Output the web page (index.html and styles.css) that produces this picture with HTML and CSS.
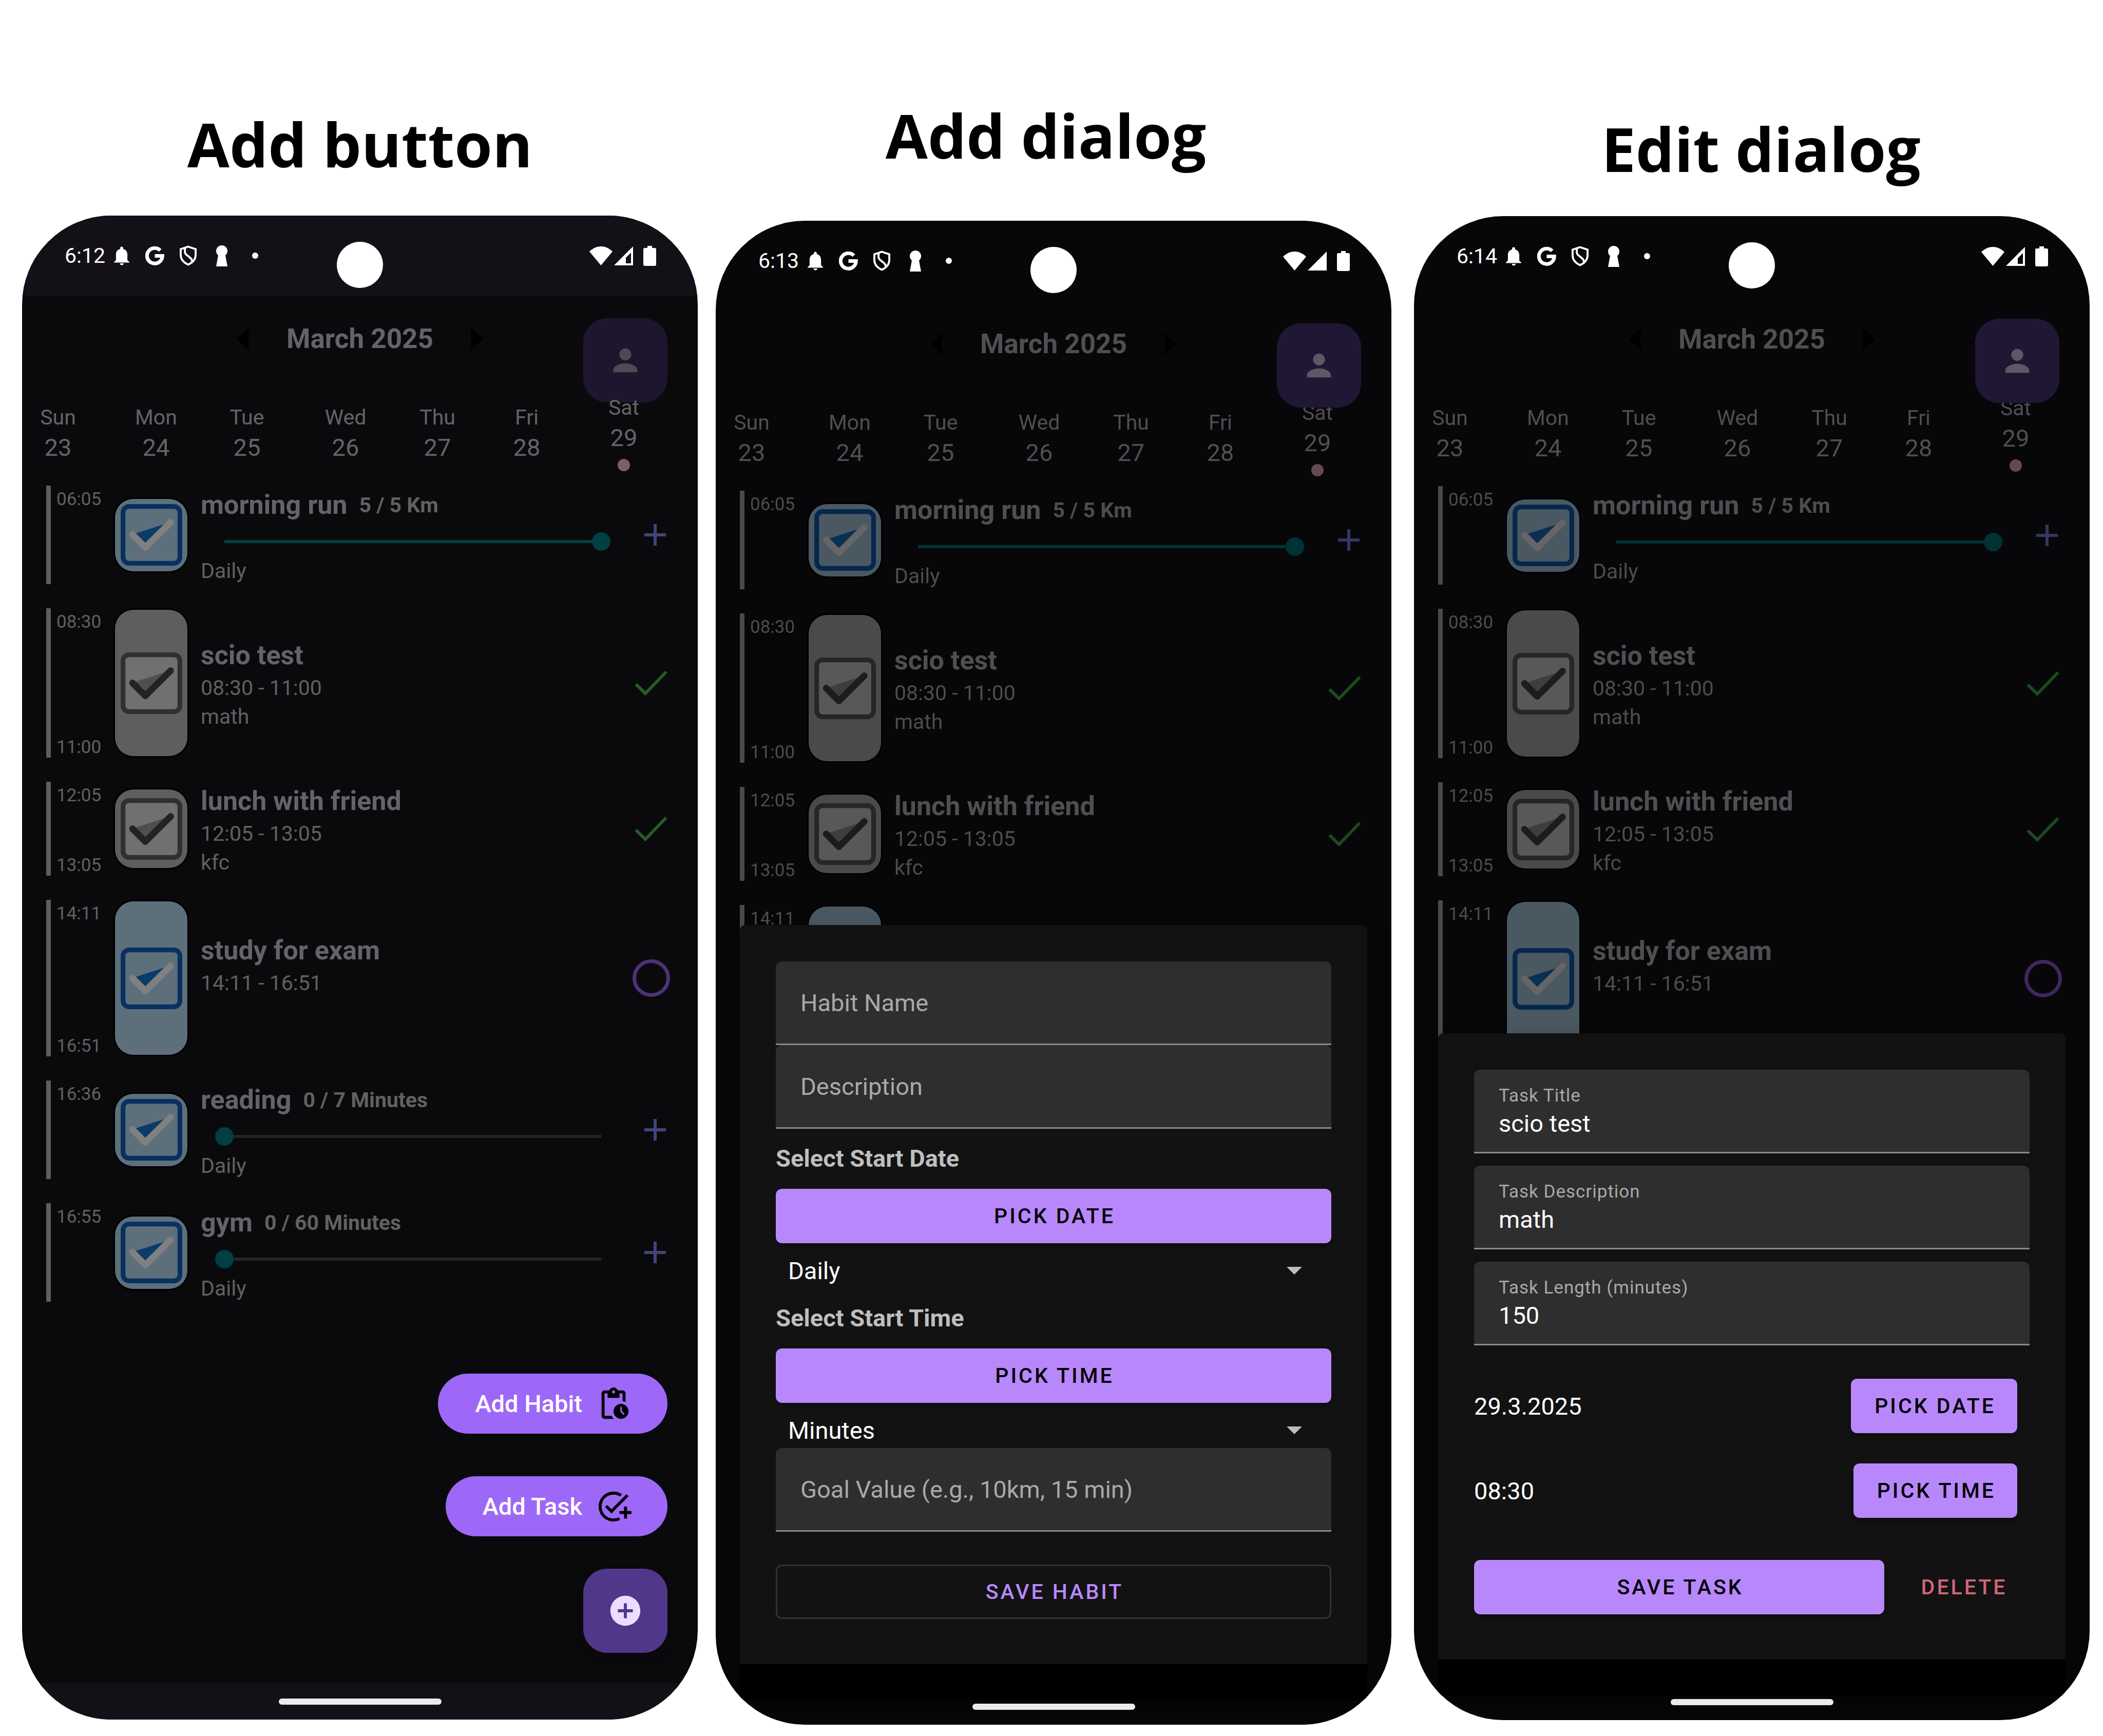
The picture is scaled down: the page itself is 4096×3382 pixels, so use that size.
FILE: index.html
```html
<!DOCTYPE html>
<html lang="en">
<head>
<meta charset="utf-8">
<meta name="viewport" content="width=device-width, initial-scale=1">
<title>Habit planner screens</title>
<link rel="stylesheet" href="styles.css">
</head>
<body>
<svg class="sprite" aria-hidden="true">
  <symbol id="bell" viewBox="0 0 31 37"><path d="M15.500 0a3 3 0 0 1 3 3v1.500C24.500 6 27 10.500 27 16v11l4 4v1H0v-1l4-4V16C4 10.500 6.500 6 12.500 4.500V3a3 3 0 0 1 3-3zM12 33.500h7.500a3.700 3.500 0 0 1-7.500 0z"/></symbol>
  <symbol id="google" viewBox="0 0 37 37"><path d="M29.100 7.900A15 15 0 1 0 33.300 18.500H18.500" fill="none" stroke="#fff" stroke-width="7"/></symbol>
  <symbol id="shield" viewBox="0 0 34 40"><path d="M17 2 32 7V18C32 27 26 34 17 38 8 34 2 27 2 18V7ZM11 5C9 16 12 17 17 21S26 28 24 32" fill="none" stroke="#fff" stroke-width="4"/></symbol>
  <symbol id="keyhole" viewBox="0 0 22 41"><circle cx="11" cy="11" r="11"/><path d="M5 14h12l5 27H0z"/></symbol>
  <symbol id="wifi" viewBox="0 0 45 37"><path d="M22.500 37 0 10C6 4 14 0 22.500 0S39 4 45 10Z"/></symbol>
  <symbol id="signal" viewBox="0 0 37 37"><path d="M37 0v37H0z"/></symbol>
  <symbol id="signal-low" viewBox="0 0 37 37"><path fill-rule="evenodd" d="M37 0v37H0zM33 12 23 22v11h10z"/></symbol>
  <symbol id="battery" viewBox="0 0 25 39"><path d="M8 0h9v4h5a3 3 0 0 1 3 3v29a3 3 0 0 1-3 3H3a3 3 0 0 1-3-3V7a3 3 0 0 1 3-3h5z"/></symbol>
  <symbol id="prev" viewBox="0 0 26 44"><path d="M26 2Q23 5 23 9V35Q23 39 26 42L24 44 0 22 24 0Z"/></symbol>
  <symbol id="next" viewBox="0 0 26 44"><path d="M0 2Q3 5 3 9V35Q3 39 0 42L2 44 26 22 2 0Z"/></symbol>
  <symbol id="person" viewBox="0 0 24 24"><path d="M12 12c2.210 0 4-1.790 4-4s-1.790-4-4-4-4 1.790-4 4 1.790 4 4 4zm0 2c-4 0-8 2-8 4.500V20h16v-1.500C20 16 16 14 12 14z"/></symbol>
  <symbol id="tick" viewBox="0 0 122 122">
    <rect class="tick-box" x="4.700" y="4.700" width="112.600" height="112.600" rx="12"/>
    <path class="tick-fill" d="M30 58 86 40 49 78Z"/>
    <path class="tick-mark" d="M23.500 60.500 48.700 86 99 36"/>
  </symbol>
  <symbol id="plus" viewBox="0 0 42 42"><path d="M21 0v42M0 21h42" fill="none" stroke="#43447b" stroke-width="6"/></symbol>
  <symbol id="check" viewBox="0 0 64 49"><path d="M2.500 27 21 45 61.500 3" fill="none" stroke="#265c28" stroke-width="6"/></symbol>
  <symbol id="ring" viewBox="0 0 73 73"><circle cx="36.500" cy="36.500" r="33" fill="none" stroke="#4f3178" stroke-width="7"/></symbol>
  <symbol id="pending" viewBox="0 0 24 24"><path d="M17,12c-2.760,0-5,2.240-5,5s2.240,5,5,5c2.760,0,5-2.240,5-5S19.760,12,17,12z M18.650,19.350l-2.150-2.150V14h1v2.790l1.850,1.850L18.650,19.350z M18,3h-3.180C14.400,1.840,13.300,1,12,1S9.600,1.840,9.180,3H6C4.900,3,4,3.900,4,5v15c0,1.100,0.900,2,2,2h6.110c-0.590-0.570-1.070-1.250-1.420-2H6V5h2v3h8V5h2v5.080c0.710,0.100,1.380,0.310,2,0.600V5C20,3.900,19.100,3,18,3z M12,5c-0.550,0-1-0.450-1-1c0-0.550,0.450-1,1-1c0.550,0,1,0.450,1,1C13,4.550,12.550,5,12,5z"/></symbol>
  <symbol id="add-task" viewBox="0 0 24 24"><path d="M22 5.180 10.590 16.600l-4.240-4.240 1.410-1.410 2.830 2.830 10-10z"/><path d="M17 4.500A9 9 0 1 0 16 20.060M20 12v8M16 16h8" fill="none" stroke="#000" stroke-width="2"/></symbol>
  <symbol id="add-circle" viewBox="0 0 24 24"><path d="M12 2C6.480 2 2 6.480 2 12s4.480 10 10 10 10-4.480 10-10S17.520 2 12 2zm5 11h-4v4h-2v-4H7v-2h4V7h2v4h4v2z"/></symbol>
</svg>

<main class="board">
  <section class="column column-button">
    <h1 class="heading">Add button</h1>
    <div class="phone phone-lit">
      <div class="status">
        <span class="clock">6:12</span>
        <span class="cell"><svg class="i-bell"><use href="#bell"/></svg></span>
        <span class="cell"><svg class="i-google"><use href="#google"/></svg></span>
        <span class="cell"><svg class="i-shield"><use href="#shield"/></svg></span>
        <span class="cell"><svg class="i-keyhole"><use href="#keyhole"/></svg></span>
        <span class="cell"><span class="more"></span></span>
        <span class="system"><svg class="i-wifi"><use href="#wifi"/></svg><svg class="i-signal"><use href="#signal-low"/></svg><svg class="i-battery"><use href="#battery"/></svg></span>
      </div>
      <div class="camera"></div>
      <button class="profile" aria-label="Profile"><svg class="i-24"><use href="#person"/></svg></button>
      <div class="screen">
        <div class="month">
          <button class="arrow" aria-label="Previous month"><svg class="i-arrow"><use href="#prev"/></svg></button>
          <h2 class="month-name">March 2025</h2>
          <button class="arrow" aria-label="Next month"><svg class="i-arrow"><use href="#next"/></svg></button>
        </div>
        <div class="week">
          <div class="day"><span>Sun</span><span class="date">23</span></div>
          <div class="day"><span>Mon</span><span class="date">24</span></div>
          <div class="day"><span>Tue</span><span class="date">25</span></div>
          <div class="day"><span>Wed</span><span class="date">26</span></div>
          <div class="day"><span>Thu</span><span class="date">27</span></div>
          <div class="day"><span>Fri</span><span class="date">28</span></div>
          <div class="day"><span>Sat</span><span class="date">29</span><span class="today"></span></div>
        </div>
        <ul class="agenda">
          <li class="row habit">
            <div class="times"><span>06:05</span></div>
            <div class="tile blue"><svg class="i-tick"><use href="#tick"/></svg></div>
            <div class="info"><div class="title-line"><h3 class="title">morning run</h3><span class="progress">5 / 5 Km</span></div><input class="slider full" type="range" min="0" max="5" value="5" aria-label="morning run progress"><p class="note">Daily</p></div>
            <button class="action" aria-label="Add progress"><svg class="i-plus"><use href="#plus"/></svg></button>
          </li>
          <li class="row task long">
            <div class="times"><span>08:30</span><span>11:00</span></div>
            <div class="tile tall gray"><svg class="i-tick"><use href="#tick"/></svg></div>
            <div class="info"><h3 class="title">scio test</h3><p class="note">08:30 - 11:00</p><p class="note">math</p></div>
            <button class="action" aria-label="Done"><svg class="i-check"><use href="#check"/></svg></button>
          </li>
          <li class="row task short">
            <div class="times"><span>12:05</span><span>13:05</span></div>
            <div class="tile mid gray"><svg class="i-tick"><use href="#tick"/></svg></div>
            <div class="info"><h3 class="title">lunch with friend</h3><p class="note">12:05 - 13:05</p><p class="note">kfc</p></div>
            <button class="action" aria-label="Done"><svg class="i-check"><use href="#check"/></svg></button>
          </li>
          <li class="row task longer">
            <div class="times"><span>14:11</span><span>16:51</span></div>
            <div class="tile tall blue"><svg class="i-tick"><use href="#tick"/></svg></div>
            <div class="info"><h3 class="title">study for exam</h3><p class="note">14:11 - 16:51</p><p class="note"></p></div>
            <button class="action" aria-label="Mark as done"><svg class="i-ring"><use href="#ring"/></svg></button>
          </li>
          <li class="row habit">
            <div class="times"><span>16:36</span></div>
            <div class="tile blue"><svg class="i-tick"><use href="#tick"/></svg></div>
            <div class="info"><div class="title-line"><h3 class="title">reading</h3><span class="progress">0 / 7 Minutes</span></div><input class="slider" type="range" min="0" max="7" value="0" aria-label="reading progress"><p class="note">Daily</p></div>
            <button class="action" aria-label="Add progress"><svg class="i-plus"><use href="#plus"/></svg></button>
          </li>
          <li class="row habit">
            <div class="times"><span>16:55</span></div>
            <div class="tile blue"><svg class="i-tick"><use href="#tick"/></svg></div>
            <div class="info"><div class="title-line"><h3 class="title">gym</h3><span class="progress">0 / 60 Minutes</span></div><input class="slider" type="range" min="0" max="60" value="0" aria-label="gym progress"><p class="note">Daily</p></div>
            <button class="action" aria-label="Add progress"><svg class="i-plus"><use href="#plus"/></svg></button>
          </li>
        </ul>
      </div>
      <div class="speed-dial">
        <button class="pill">Add Habit<svg class="i-24"><use href="#pending"/></svg></button>
        <button class="pill">Add Task<svg class="i-24"><use href="#add-task"/></svg></button>
        <button class="fab" aria-label="Add"><svg class="i-24"><use href="#add-circle"/></svg></button>
      </div>
      <div class="nav"><span class="home"></span></div>
    </div>
  </section>

  <section class="column column-add">
    <h1 class="heading">Add dialog</h1>
    <div class="phone">
      <div class="status">
        <span class="clock">6:13</span>
        <span class="cell"><svg class="i-bell"><use href="#bell"/></svg></span>
        <span class="cell"><svg class="i-google"><use href="#google"/></svg></span>
        <span class="cell"><svg class="i-shield"><use href="#shield"/></svg></span>
        <span class="cell"><svg class="i-keyhole"><use href="#keyhole"/></svg></span>
        <span class="cell"><span class="more"></span></span>
        <span class="system"><svg class="i-wifi"><use href="#wifi"/></svg><svg class="i-signal"><use href="#signal"/></svg><svg class="i-battery"><use href="#battery"/></svg></span>
      </div>
      <div class="camera"></div>
      <div class="screen dimmed">
        <div class="month">
          <button class="arrow" aria-label="Previous month"><svg class="i-arrow"><use href="#prev"/></svg></button>
          <h2 class="month-name">March 2025</h2>
          <button class="arrow" aria-label="Next month"><svg class="i-arrow"><use href="#next"/></svg></button>
        </div>
        <div class="week">
          <div class="day"><span>Sun</span><span class="date">23</span></div>
          <div class="day"><span>Mon</span><span class="date">24</span></div>
          <div class="day"><span>Tue</span><span class="date">25</span></div>
          <div class="day"><span>Wed</span><span class="date">26</span></div>
          <div class="day"><span>Thu</span><span class="date">27</span></div>
          <div class="day"><span>Fri</span><span class="date">28</span></div>
          <div class="day"><span>Sat</span><span class="date">29</span><span class="today"></span></div>
        </div>
        <ul class="agenda">
          <li class="row habit">
            <div class="times"><span>06:05</span></div>
            <div class="tile blue"><svg class="i-tick"><use href="#tick"/></svg></div>
            <div class="info"><div class="title-line"><h3 class="title">morning run</h3><span class="progress">5 / 5 Km</span></div><input class="slider full" type="range" min="0" max="5" value="5" aria-label="morning run progress"><p class="note">Daily</p></div>
            <button class="action" aria-label="Add progress"><svg class="i-plus"><use href="#plus"/></svg></button>
          </li>
          <li class="row task long">
            <div class="times"><span>08:30</span><span>11:00</span></div>
            <div class="tile tall gray"><svg class="i-tick"><use href="#tick"/></svg></div>
            <div class="info"><h3 class="title">scio test</h3><p class="note">08:30 - 11:00</p><p class="note">math</p></div>
            <button class="action" aria-label="Done"><svg class="i-check"><use href="#check"/></svg></button>
          </li>
          <li class="row task short">
            <div class="times"><span>12:05</span><span>13:05</span></div>
            <div class="tile mid gray"><svg class="i-tick"><use href="#tick"/></svg></div>
            <div class="info"><h3 class="title">lunch with friend</h3><p class="note">12:05 - 13:05</p><p class="note">kfc</p></div>
            <button class="action" aria-label="Done"><svg class="i-check"><use href="#check"/></svg></button>
          </li>
          <li class="row task longer">
            <div class="times"><span>14:11</span></div>
            <div class="tile tall blue"></div>
          </li>
        </ul>
      </div>
      <button class="profile" aria-label="Profile"><svg class="i-24"><use href="#person"/></svg></button>
      <form class="sheet">
        <input class="field" type="text" placeholder="Habit Name" aria-label="Habit Name">
        <input class="field" type="text" placeholder="Description" aria-label="Description">
        <p class="group-label">Select Start Date</p>
        <button class="btn" type="button">PICK DATE</button>
        <div class="picker"><select aria-label="Repeat"><option>Daily</option></select></div>
        <p class="group-label">Select Start Time</p>
        <button class="btn" type="button">PICK TIME</button>
        <div class="picker"><select aria-label="Unit"><option>Minutes</option></select></div>
        <input class="field" type="text" placeholder="Goal Value (e.g., 10km, 15 min)" aria-label="Goal Value">
        <button class="btn outline" type="button">SAVE HABIT</button>
      </form>
      <div class="nav"><span class="home"></span></div>
    </div>
  </section>

  <section class="column column-edit">
    <h1 class="heading">Edit dialog</h1>
    <div class="phone">
      <div class="status">
        <span class="clock">6:14</span>
        <span class="cell"><svg class="i-bell"><use href="#bell"/></svg></span>
        <span class="cell"><svg class="i-google"><use href="#google"/></svg></span>
        <span class="cell"><svg class="i-shield"><use href="#shield"/></svg></span>
        <span class="cell"><svg class="i-keyhole"><use href="#keyhole"/></svg></span>
        <span class="cell"><span class="more"></span></span>
        <span class="system"><svg class="i-wifi"><use href="#wifi"/></svg><svg class="i-signal"><use href="#signal-low"/></svg><svg class="i-battery"><use href="#battery"/></svg></span>
      </div>
      <div class="camera"></div>
      <div class="screen dimmed">
        <div class="month">
          <button class="arrow" aria-label="Previous month"><svg class="i-arrow"><use href="#prev"/></svg></button>
          <h2 class="month-name">March 2025</h2>
          <button class="arrow" aria-label="Next month"><svg class="i-arrow"><use href="#next"/></svg></button>
        </div>
        <div class="week">
          <div class="day"><span>Sun</span><span class="date">23</span></div>
          <div class="day"><span>Mon</span><span class="date">24</span></div>
          <div class="day"><span>Tue</span><span class="date">25</span></div>
          <div class="day"><span>Wed</span><span class="date">26</span></div>
          <div class="day"><span>Thu</span><span class="date">27</span></div>
          <div class="day"><span>Fri</span><span class="date">28</span></div>
          <div class="day"><span>Sat</span><span class="date">29</span><span class="today"></span></div>
        </div>
        <ul class="agenda">
          <li class="row habit">
            <div class="times"><span>06:05</span></div>
            <div class="tile blue"><svg class="i-tick"><use href="#tick"/></svg></div>
            <div class="info"><div class="title-line"><h3 class="title">morning run</h3><span class="progress">5 / 5 Km</span></div><input class="slider full" type="range" min="0" max="5" value="5" aria-label="morning run progress"><p class="note">Daily</p></div>
            <button class="action" aria-label="Add progress"><svg class="i-plus"><use href="#plus"/></svg></button>
          </li>
          <li class="row task long">
            <div class="times"><span>08:30</span><span>11:00</span></div>
            <div class="tile tall gray"><svg class="i-tick"><use href="#tick"/></svg></div>
            <div class="info"><h3 class="title">scio test</h3><p class="note">08:30 - 11:00</p><p class="note">math</p></div>
            <button class="action" aria-label="Done"><svg class="i-check"><use href="#check"/></svg></button>
          </li>
          <li class="row task short">
            <div class="times"><span>12:05</span><span>13:05</span></div>
            <div class="tile mid gray"><svg class="i-tick"><use href="#tick"/></svg></div>
            <div class="info"><h3 class="title">lunch with friend</h3><p class="note">12:05 - 13:05</p><p class="note">kfc</p></div>
            <button class="action" aria-label="Done"><svg class="i-check"><use href="#check"/></svg></button>
          </li>
          <li class="row task longer">
            <div class="times"><span>14:11</span></div>
            <div class="tile tall blue"><svg class="i-tick"><use href="#tick"/></svg></div>
            <div class="info"><h3 class="title">study for exam</h3><p class="note">14:11 - 16:51</p><p class="note"></p></div>
            <button class="action" aria-label="Mark as done"><svg class="i-ring"><use href="#ring"/></svg></button>
          </li>
        </ul>
      </div>
      <button class="profile" aria-label="Profile"><svg class="i-24"><use href="#person"/></svg></button>
      <form class="sheet">
        <div class="fields">
          <div class="labelled"><label for="task-title">Task Title</label><input id="task-title" type="text" value="scio test"></div>
          <div class="labelled"><label for="task-text">Task Description</label><input id="task-text" type="text" value="math"></div>
          <div class="labelled"><label for="task-length">Task Length (minutes)</label><input id="task-length" type="text" value="150"></div>
        </div>
        <div class="pick-row"><span>29.3.2025</span><button class="btn" type="button">PICK DATE</button></div>
        <div class="pick-row"><span>08:30</span><button class="btn" type="button">PICK TIME</button></div>
        <div class="form-actions"><button class="btn save" type="button">SAVE TASK</button><button class="btn delete" type="button">DELETE</button></div>
      </form>
      <div class="nav"><span class="home"></span></div>
    </div>
  </section>
</main>
</body>
</html>
```

FILE: styles.css
```css
* { box-sizing: border-box; }

body {
  margin: 0;
  min-height: 100vh;
  background: #fff;
  font-family: Roboto, "Liberation Sans", sans-serif;
  font-size: 41px;
  line-height: 48px;
}

h1, h2, h3, p, ul { margin: 0; padding: 0; }
ul { list-style: none; }
svg { display: block; flex: none; fill: currentColor; }
.sprite { position: absolute; width: 0; height: 0; }

button {
  display: flex;
  align-items: center;
  justify-content: center;
  margin: 0;
  padding: 0;
  border: 0;
  background: none;
  color: inherit;
  font: inherit;
}

input, select { font: inherit; color: inherit; border: 0; outline: 0; }

/* Board */
.board { display: flex; align-items: flex-start; padding: 0 26px 0 43px; }
.column { flex: 1; min-width: 0; }
.column-button { padding-top: 200px; }
.column-add { padding-top: 183px; margin-left: 35px; }
.column-edit { padding-top: 209px; margin-left: 44px; }

.heading {
  font: bold 119px/160px "Open Sans", "Noto Sans", sans-serif;
  text-align: center;
  color: #000;
}
.column-button .heading { margin-bottom: 60px; }
.column-add .heading { margin-bottom: 87px; padding-right: 30px; }
.column-edit .heading { margin-bottom: 52px; padding-left: 36px; }

/* Phone */
.phone {
  position: relative;
  display: flex;
  flex-direction: column;
  aspect-ratio: 1316 / 2930;
  border-radius: 174px;
  overflow: hidden;
  background: #070709;
  color: #666368;
}
.phone-lit { background: #0a0a0c; }
.phone-lit .status, .phone-lit .nav { background: #131117; }

.status {
  display: flex;
  align-items: center;
  height: 156px;
  padding: 0 81px 0 83px;
  color: #fff;
}
.clock { width: 78px; white-space: nowrap; }
.cell { display: flex; justify-content: center; width: 65px; }
.more { width: 12px; height: 12px; border-radius: 50%; background: #fff; }
.system { display: flex; align-items: center; margin-left: auto; }
.i-bell { width: 30px; height: 37px; }
.i-google { width: 37px; height: 37px; }
.i-shield { width: 33px; height: 40px; }
.i-keyhole { width: 22px; height: 41px; }
.i-wifi { width: 45px; height: 37px; margin-right: 3px; }
.i-signal { width: 37px; height: 37px; margin-right: 20px; }
.i-battery { width: 25px; height: 39px; }

.camera {
  position: absolute;
  top: 51px;
  left: 50%;
  width: 90px;
  height: 90px;
  margin-left: -45px;
  border-radius: 50%;
  background: #fff;
}

.screen { flex: 1; min-height: 0; position: relative; padding-top: 53px; }
.dimmed { filter: brightness(.79); }

.month { display: flex; align-items: center; justify-content: center; gap: 71px; height: 62px; }
.month-name { font-size: 53px; line-height: 62px; font-weight: bold; }
.arrow { color: #000; }
.i-arrow { width: 26px; height: 44px; }

.profile {
  position: absolute;
  top: 200px;
  right: 59px;
  width: 164px;
  height: 164px;
  border-radius: 47px;
  background: #201735;
  color: #5e5765;
}
.phone-lit .profile { background: #1e162e; color: #4e4a53; }
.i-24 { width: 70px; height: 70px; }

.week {
  display: grid;
  grid-template-columns: 191fr 177fr 192fr 179fr 174fr 189fr 90fr;
  align-items: center;
  margin-top: 79px;
  padding: 0 99px 0 25px;
}
.day { display: flex; flex-direction: column; align-items: center; width: 90px; gap: 7px; }
.date { font-size: 47px; line-height: 55px; }
.today { width: 24px; height: 24px; margin-top: 7px; border-radius: 50%; background: #7f5e64; }

/* Agenda */
.agenda { display: flex; flex-direction: column; gap: 47px; padding: 28px 47px 0; color: #616161; }
.row { display: flex; align-items: center; height: 192px; border-left: 9px solid #5e5e5e; }
.long { height: 291px; }
.short { height: 183px; }
.longer { height: 305px; }

.times {
  display: flex;
  flex-direction: column;
  justify-content: space-between;
  align-self: stretch;
  width: 125px;
  padding: 6px 0 0 11px;
  font-size: 35px;
  line-height: 41px;
}

.tile {
  display: flex;
  align-items: center;
  justify-content: center;
  flex: none;
  width: 141px;
  height: 141px;
  border-radius: 36px;
  box-shadow: 0 0 0 3px #000;
}
.mid { height: 153px; }
.tall { height: auto; align-self: stretch; margin: 3px 0; }
.i-tick { width: 120px; height: 120px; }
.blue { background: #5e6f7c; --box: #083160; --inner: #5e6f7c; --fill: #0b3b69; --mark: #808080; }
.gray { background: #5e5e5e; --box: #303030; --inner: #707070; --fill: #4f4f4f; --mark: #232323; }
.tick-box { fill: var(--inner); stroke: var(--box); stroke-width: 9.3px; }
.tick-fill { fill: var(--fill); }
.tick-mark { fill: none; stroke: var(--mark); stroke-width: 13px; stroke-linecap: round; stroke-linejoin: round; }

.info { display: flex; flex-direction: column; flex: 1; min-width: 0; padding: 4px 0 0 26px; }
.title-line { display: flex; align-items: center; gap: 23px; }
.title { font-size: 52px; line-height: 62px; font-weight: bold; color: #666368; }
.progress { font-weight: bold; }
.note { min-height: 48px; }
.task .note { margin-top: 8px; }
.habit .info { margin-right: 23px; }

.slider {
  appearance: none;
  -webkit-appearance: none;
  height: 66px;
  margin: 7px 28px 0;
  background: linear-gradient(#242426, #242426) center / calc(100% - 36px) 6px no-repeat;
}
.slider.full { background-image: linear-gradient(#003f42, #003f42); }
.slider::-webkit-slider-thumb {
  -webkit-appearance: none;
  width: 36px;
  height: 36px;
  border-radius: 50%;
  background: #003f42;
}

.action { flex: none; width: 88px; height: 88px; }
.habit .action { width: 72px; }
.i-plus { width: 42px; height: 42px; }
.i-check { width: 64px; height: 49px; }
.i-ring { width: 73px; height: 73px; }

/* Add menu */
.speed-dial {
  position: absolute;
  right: 59px;
  bottom: 130px;
  display: flex;
  flex-direction: column;
  align-items: flex-end;
}
.pill {
  gap: 26px;
  height: 117px;
  margin-bottom: 83px;
  padding: 0 70px 0 72px;
  border-radius: 59px;
  background: #9d68f7;
  color: #fff;
  font-size: 47px;
  font-weight: 500;
  line-height: 55px;
}
.pill + .pill { margin-bottom: 63px; }
.pill svg { color: #000; }
.fab {
  width: 164px;
  height: 164px;
  border-radius: 47px;
  background: #50378a;
  color: #ecdcff;
  box-shadow: 0 12px 24px rgba(0, 0, 0, .15);
}

.nav { display: flex; justify-content: center; height: 71px; padding-top: 30px; position: relative; }
.home { width: 317px; height: 12px; border-radius: 6px; background: #ebebeb; }

/* Bottom sheet */
.sheet {
  position: absolute;
  left: 47px;
  right: 47px;
  bottom: 47px;
  display: flex;
  flex-direction: column;
  padding: 71px 70px 88px;
  border-bottom: 71px solid #000;
  border-radius: 10px 10px 0 0;
  background: #121212;
  color: #fff;
  font-size: 47px;
  line-height: 55px;
  box-shadow: 0 24px 48px rgba(0, 0, 0, .3);
}
.field, .labelled {
  height: 163px;
  border-bottom: 3px solid #8a8a8a;
  border-radius: 12px 12px 0 0;
  background: #2e2e2e;
}
.field { width: 100%; padding: 0 48px; }
.field::placeholder { color: #a9a9a9; opacity: 1; }
.group-label { margin: 30px 0 32px; font-weight: bold; color: #bebebe; }

.btn {
  height: 106px;
  padding: 0 42px 0 46px;
  border-radius: 12px;
  background: #b987fc;
  color: #000;
  font-size: 41px;
  font-weight: 500;
  line-height: 48px;
  letter-spacing: 4px;
  box-shadow: 0 6px 8px rgba(0, 0, 0, .3);
}
.outline {
  margin-top: 64px;
  border: 3px solid #323232;
  background: none;
  color: #b987fc;
  box-shadow: none;
}

.picker { position: relative; margin-top: 18px; }
.picker select {
  display: block;
  appearance: none;
  -webkit-appearance: none;
  width: 100%;
  height: 70px;
  padding: 0 24px;
  background: none;
}
.picker::after {
  content: "";
  position: absolute;
  right: 57px;
  top: 28px;
  border: 15px solid transparent;
  border-top-color: #bdbdbd;
  border-bottom: 0;
  pointer-events: none;
}

.fields { display: flex; flex-direction: column; gap: 24px; margin-bottom: 6px; }
.labelled { display: flex; flex-direction: column; gap: 6px; padding: 30px 48px 0; }
.labelled label { font-size: 35px; line-height: 41px; letter-spacing: 1px; color: #a9a9a9; }
.labelled input { height: 55px; padding: 0; background: none; }

.pick-row { display: flex; align-items: center; justify-content: space-between; margin-top: 59px; padding-right: 24px; }
.form-actions { display: flex; gap: 24px; margin-top: 82px; }
.save { flex: 1; }
.delete { width: 259px; background: none; color: #cf6679; box-shadow: none; }
```
